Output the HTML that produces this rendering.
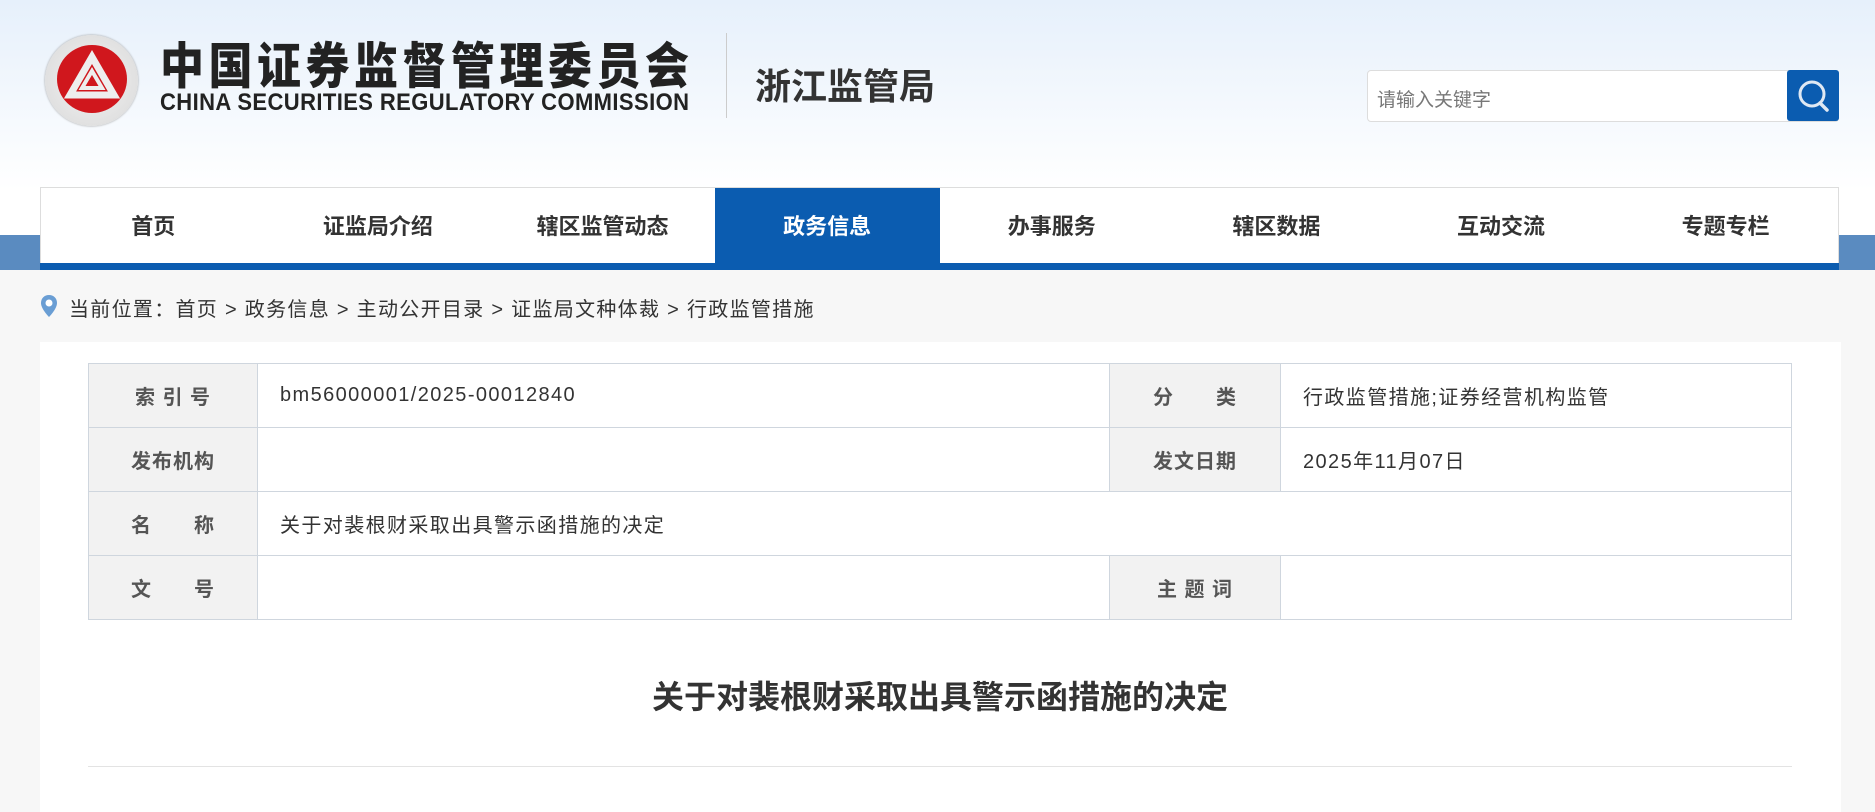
<!DOCTYPE html>
<html><head><meta charset="utf-8">
<style>
*{margin:0;padding:0;box-sizing:border-box}
body{width:1875px;height:801px;overflow:hidden;background:#f7f7f7;font-family:"Liberation Sans","Noto Sans CJK SC",sans-serif;color:#333;position:relative}
.hdr{position:absolute;left:0;top:0;width:1875px;height:270px;background:linear-gradient(#e6f0fb,#ffffff 190px)}
.band{position:absolute;top:235px;height:35px;background:#5a8bc0}
.logo{position:absolute;left:45px;top:35px;width:93px;height:91px;border-radius:50%;background:radial-gradient(#f4f4f4,#d8d8d8);box-shadow:0 0 2px #999}
.logo .in{position:absolute;left:12px;top:10px;width:70px;height:68px;border-radius:50%;background:#d0171d}
.t1{position:absolute;left:160px;top:40px;font-size:44px;font-weight:900;letter-spacing:4.5px;color:#222;white-space:nowrap;line-height:50px;transform:scaleY(1.12);transform-origin:0 0}
.t2{position:absolute;left:160px;top:88px;font-size:22px;font-weight:bold;color:#222;white-space:nowrap;letter-spacing:0.4px;transform:scaleY(1.1);transform-origin:0 0}
.div{position:absolute;left:726px;top:33px;width:1px;height:85px;background:#ccc}
.t3{position:absolute;left:755px;top:58px;font-size:36px;font-weight:bold;color:#333;white-space:nowrap}
.search{position:absolute;left:1367px;top:70px;width:472px;height:52px;border:1px solid #ddd;border-radius:4px;background:#fff}
.search span{position:absolute;left:9px;top:14px;font-size:19px;color:#777}
.sbtn{position:absolute;left:1787px;top:70px;width:52px;height:51px;background:#0b5cb0;border-radius:3px}
.nav{position:absolute;left:40px;top:187px;width:1799px;height:83px;background:#fff;border:1px solid #ddd;border-bottom:none;display:flex}
.nav div{flex:1;text-align:center;font-size:22px;font-weight:bold;color:#333;line-height:78px;height:76px}
.nav div.on{background:#0b5cb0;color:#fff}
.nav:after{content:"";position:absolute;left:-1px;right:-1px;bottom:0;height:7px;background:#0b5cb0}
.crumb{position:absolute;left:69px;top:293px;font-size:20px;letter-spacing:1.3px;color:#333;white-space:nowrap}
.panel{position:absolute;left:40px;top:342px;width:1801px;height:470px;background:#fff}
table{position:absolute;left:88px;top:363px;width:1704px;border-collapse:collapse;table-layout:fixed}
td{border:1px solid #cfd6de;height:64px;font-size:20px;letter-spacing:1.4px;color:#333;padding-left:22px;white-space:nowrap}
td.l{background:#f2f2f2;color:#555;font-weight:bold;text-align:center;padding:0;font-size:20px;letter-spacing:1px}
h1{position:absolute;left:88px;width:1704px;top:672px;text-align:center;font-size:32px;font-weight:bold;color:#333}
.line{position:absolute;left:88px;top:766px;width:1704px;height:1px;background:#e3e3e3}
</style></head><body>
<div class="hdr"></div>
<div class="band" style="left:0;width:40px"></div>
<div class="band" style="left:1839px;width:36px"></div>
<div class="logo"><div class="in"></div>
<svg style="position:absolute;left:17px;top:14px" width="60" height="60" viewBox="0 0 60 60"><path d="M30 8 L52 46 L8 46 Z" fill="none" stroke="#eee" stroke-width="7" stroke-linejoin="miter"/><path d="M30 22 L40 39 L20 39 Z" fill="none" stroke="#eee" stroke-width="4"/></svg></div>
<div class="t1">中国证券监督管理委员会</div>
<div class="t2">CHINA SECURITIES REGULATORY COMMISSION</div>
<div class="div"></div>
<div class="t3">浙江监管局</div>
<div class="search"><span>请输入关键字</span></div>
<div class="sbtn"><svg width="52" height="51" viewBox="0 0 52 51"><circle cx="25" cy="24" r="12" fill="none" stroke="#dfe8f3" stroke-width="3"/><path d="M33 33 L40 40" stroke="#dfe8f3" stroke-width="3.5" stroke-linecap="round"/></svg></div>
<div class="nav"><div>首页</div><div>证监局介绍</div><div>辖区监管动态</div><div class="on">政务信息</div><div>办事服务</div><div>辖区数据</div><div>互动交流</div><div>专题专栏</div></div>
<svg style="position:absolute;left:40px;top:294px" width="18" height="24" viewBox="0 0 18 24"><path d="M9 1 C4 1 1 4.5 1 9 C1 15 9 23 9 23 C9 23 17 15 17 9 C17 4.5 14 1 9 1Z" fill="#6a9ed4"/><circle cx="9" cy="9" r="3.5" fill="#fff"/></svg>
<div class="crumb">当前位置：首页 &gt; 政务信息 &gt; 主动公开目录 &gt; 证监局文种体裁 &gt; 行政监管措施</div>
<div class="panel"></div>
<table>
<colgroup><col style="width:169px"><col style="width:852px"><col style="width:171px"><col></colgroup>
<tr><td class="l">索 引 号</td><td>bm56000001/2025-00012840</td><td class="l">分　　类</td><td>行政监管措施;证券经营机构监管</td></tr>
<tr><td class="l">发布机构</td><td></td><td class="l">发文日期</td><td>2025年11月07日</td></tr>
<tr><td class="l">名　　称</td><td colspan="3">关于对裴根财采取出具警示函措施的决定</td></tr>
<tr><td class="l">文　　号</td><td></td><td class="l">主 题 词</td><td></td></tr>
</table>
<h1>关于对裴根财采取出具警示函措施的决定</h1>
<div class="line"></div>
</body></html>
